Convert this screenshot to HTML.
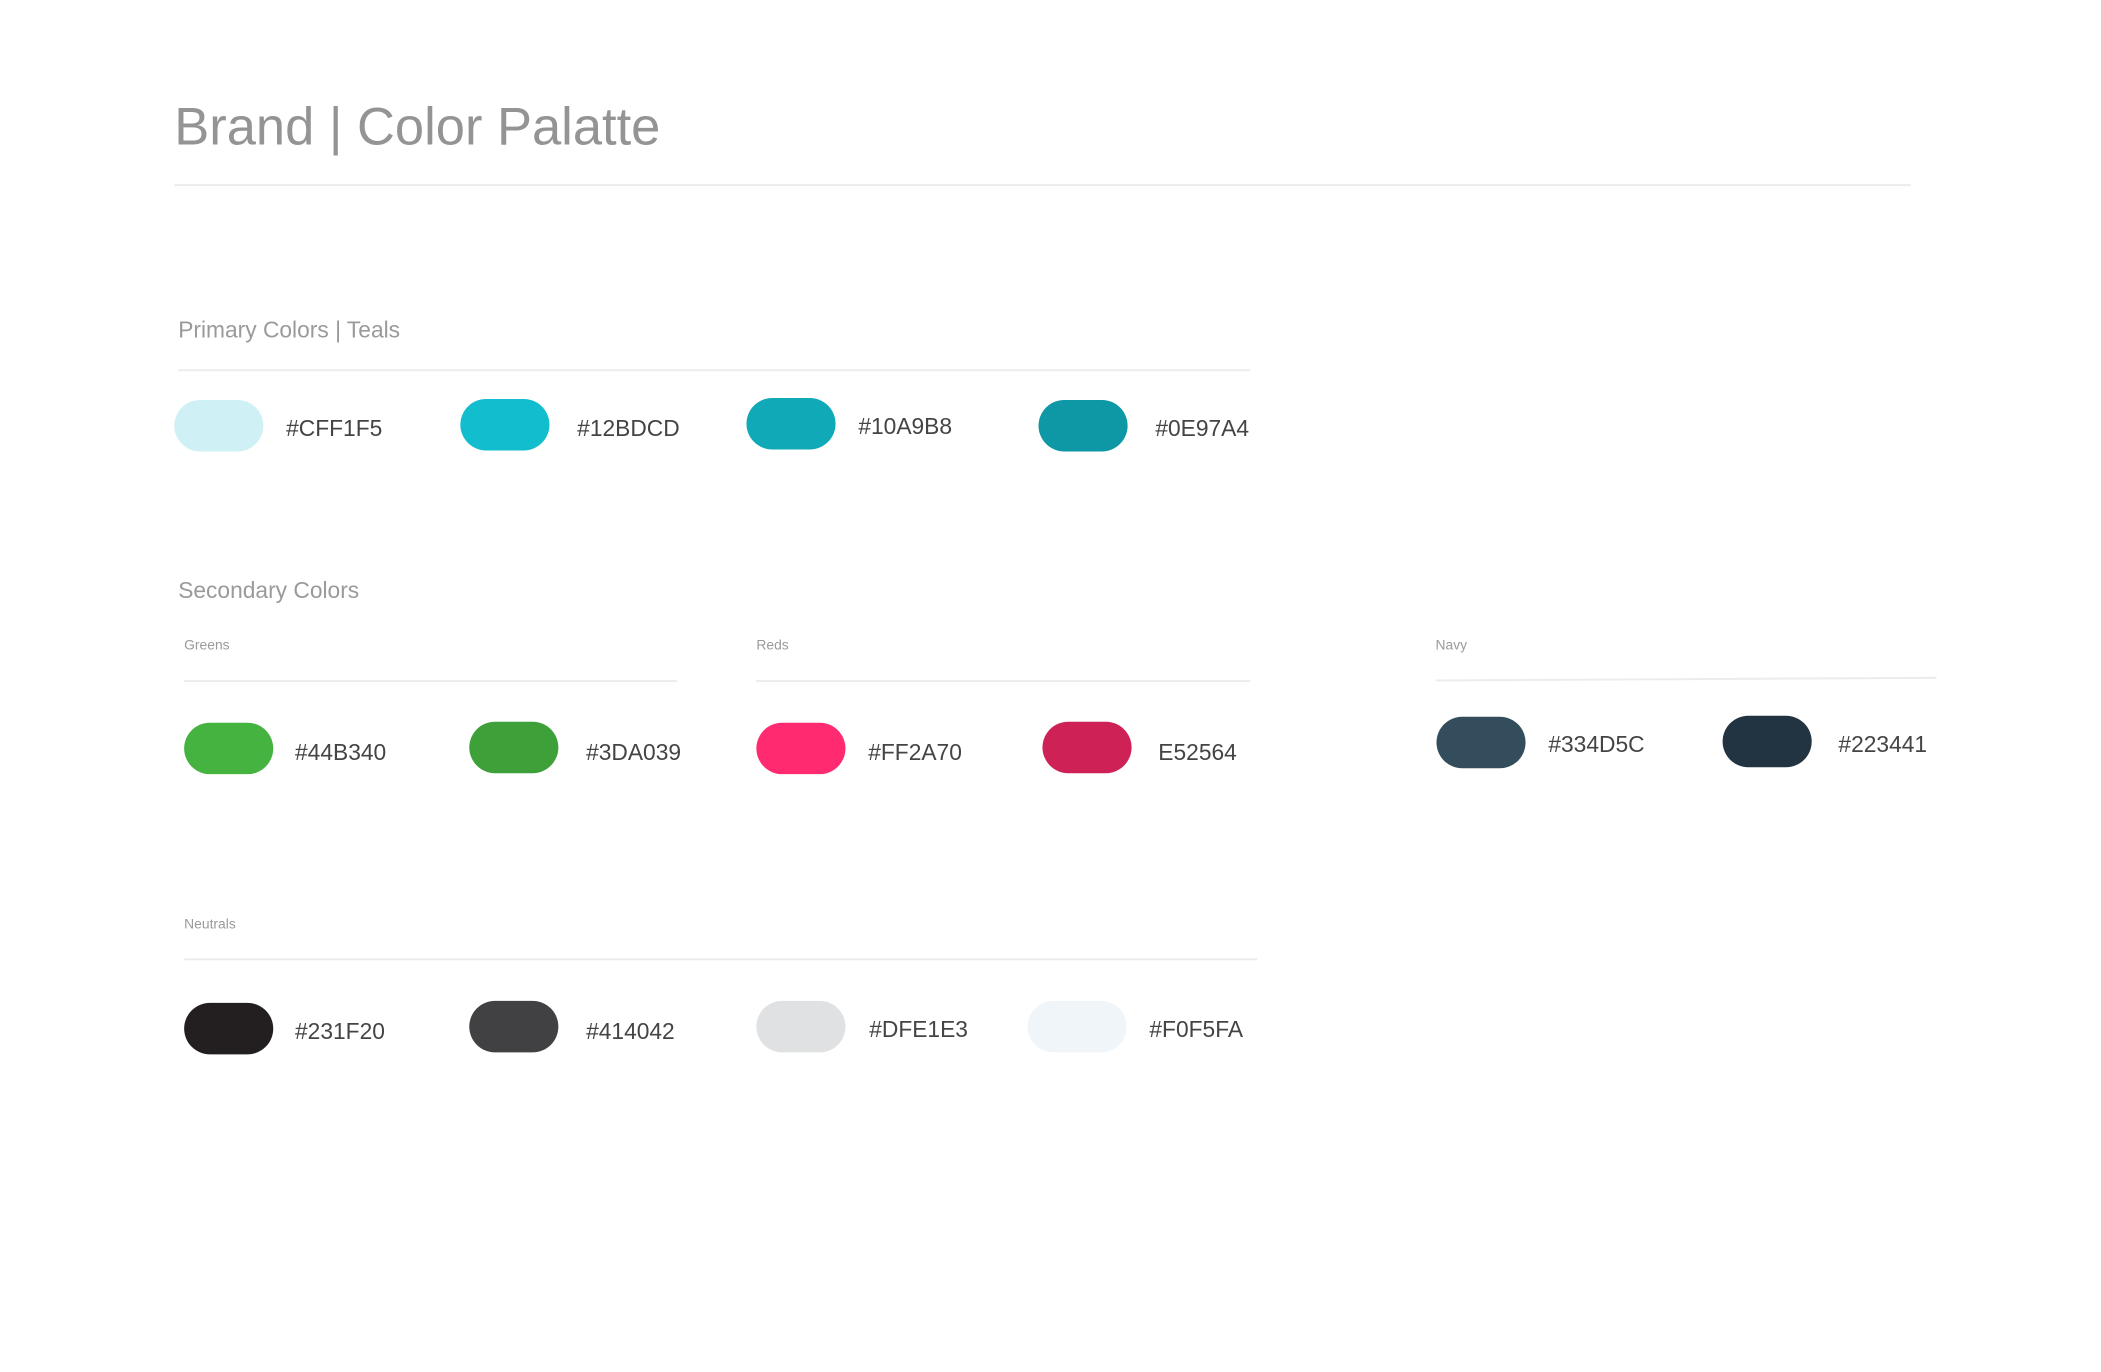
<!DOCTYPE html>
<html><head><meta charset="utf-8"><style>
body{margin:0;width:2101px;height:1372px;background:#fff;position:relative;overflow:hidden;font-family:"Liberation Sans",sans-serif}
#w{position:absolute;left:0;top:0;width:2101px;height:1372px;transform:scale(0.99);transform-origin:0 0}
.t{position:absolute;color:#9a9a9a;white-space:nowrap}
.h{position:absolute;color:#444;font-size:23px;transform:translateY(-50%);white-space:nowrap}
.s{position:absolute;width:90px;height:52px;border-radius:26px}
.l{position:absolute;height:2px;background:#ececec}
</style></head><body><div id="w">
<div class="t" style="left:176px;top:98px;font-size:53px;color:#949494">Brand | Color Palatte</div>
<div class="l" style="left:176px;top:186px;width:1754px"></div>

<div class="t" style="left:180px;top:320px;font-size:23px">Primary Colors | Teals</div>
<div class="l" style="left:180px;top:373px;width:1083px"></div>
<div class="s" style="left:176px;top:404px;background:#CFF1F5"></div><div class="h" style="left:289px;top:433px">#CFF1F5</div>
<div class="s" style="left:465px;top:403px;background:#12BDCD"></div><div class="h" style="left:583px;top:433px">#12BDCD</div>
<div class="s" style="left:754px;top:402px;background:#10A9B8"></div><div class="h" style="left:867px;top:431px">#10A9B8</div>
<div class="s" style="left:1049px;top:404px;background:#0E97A4"></div><div class="h" style="left:1167px;top:433px">#0E97A4</div>

<div class="t" style="left:180px;top:583px;font-size:23px">Secondary Colors</div>
<div class="t" style="left:186px;top:643px;font-size:14px">Greens</div>
<div class="t" style="left:764px;top:643px;font-size:14px">Reds</div>
<div class="t" style="left:1450px;top:643px;font-size:14px">Navy</div>
<div class="l" style="left:186px;top:687px;width:498px"></div>
<div class="l" style="left:764px;top:687px;width:499px"></div>
<div class="l" style="left:1450px;top:685px;width:506px;transform:rotate(-0.3deg)"></div>

<div class="s" style="left:186px;top:730px;background:#44B340"></div><div class="h" style="left:298px;top:760px">#44B340</div>
<div class="s" style="left:474px;top:729px;background:#3DA039"></div><div class="h" style="left:592px;top:760px">#3DA039</div>
<div class="s" style="left:764px;top:730px;background:#FF2A70"></div><div class="h" style="left:877px;top:760px">#FF2A70</div>
<div class="s" style="left:1053px;top:729px;background:#CE2256"></div><div class="h" style="left:1170px;top:760px">E52564</div>
<div class="s" style="left:1451px;top:724px;background:#334D5C"></div><div class="h" style="left:1564px;top:752px">#334D5C</div>
<div class="s" style="left:1740px;top:723px;background:#223441"></div><div class="h" style="left:1857px;top:752px">#223441</div>

<div class="t" style="left:186px;top:925px;font-size:14px">Neutrals</div>
<div class="l" style="left:186px;top:968px;width:1084px"></div>
<div class="s" style="left:186px;top:1013px;background:#231F20"></div><div class="h" style="left:298px;top:1042px">#231F20</div>
<div class="s" style="left:474px;top:1011px;background:#414042"></div><div class="h" style="left:592px;top:1042px">#414042</div>
<div class="s" style="left:764px;top:1011px;background:#DFE1E3"></div><div class="h" style="left:878px;top:1040px">#DFE1E3</div>
<div class="s" style="left:1038px;top:1011px;width:100px;background:#F0F5FA"></div><div class="h" style="left:1161px;top:1040px">#F0F5FA</div>
</div></body></html>
